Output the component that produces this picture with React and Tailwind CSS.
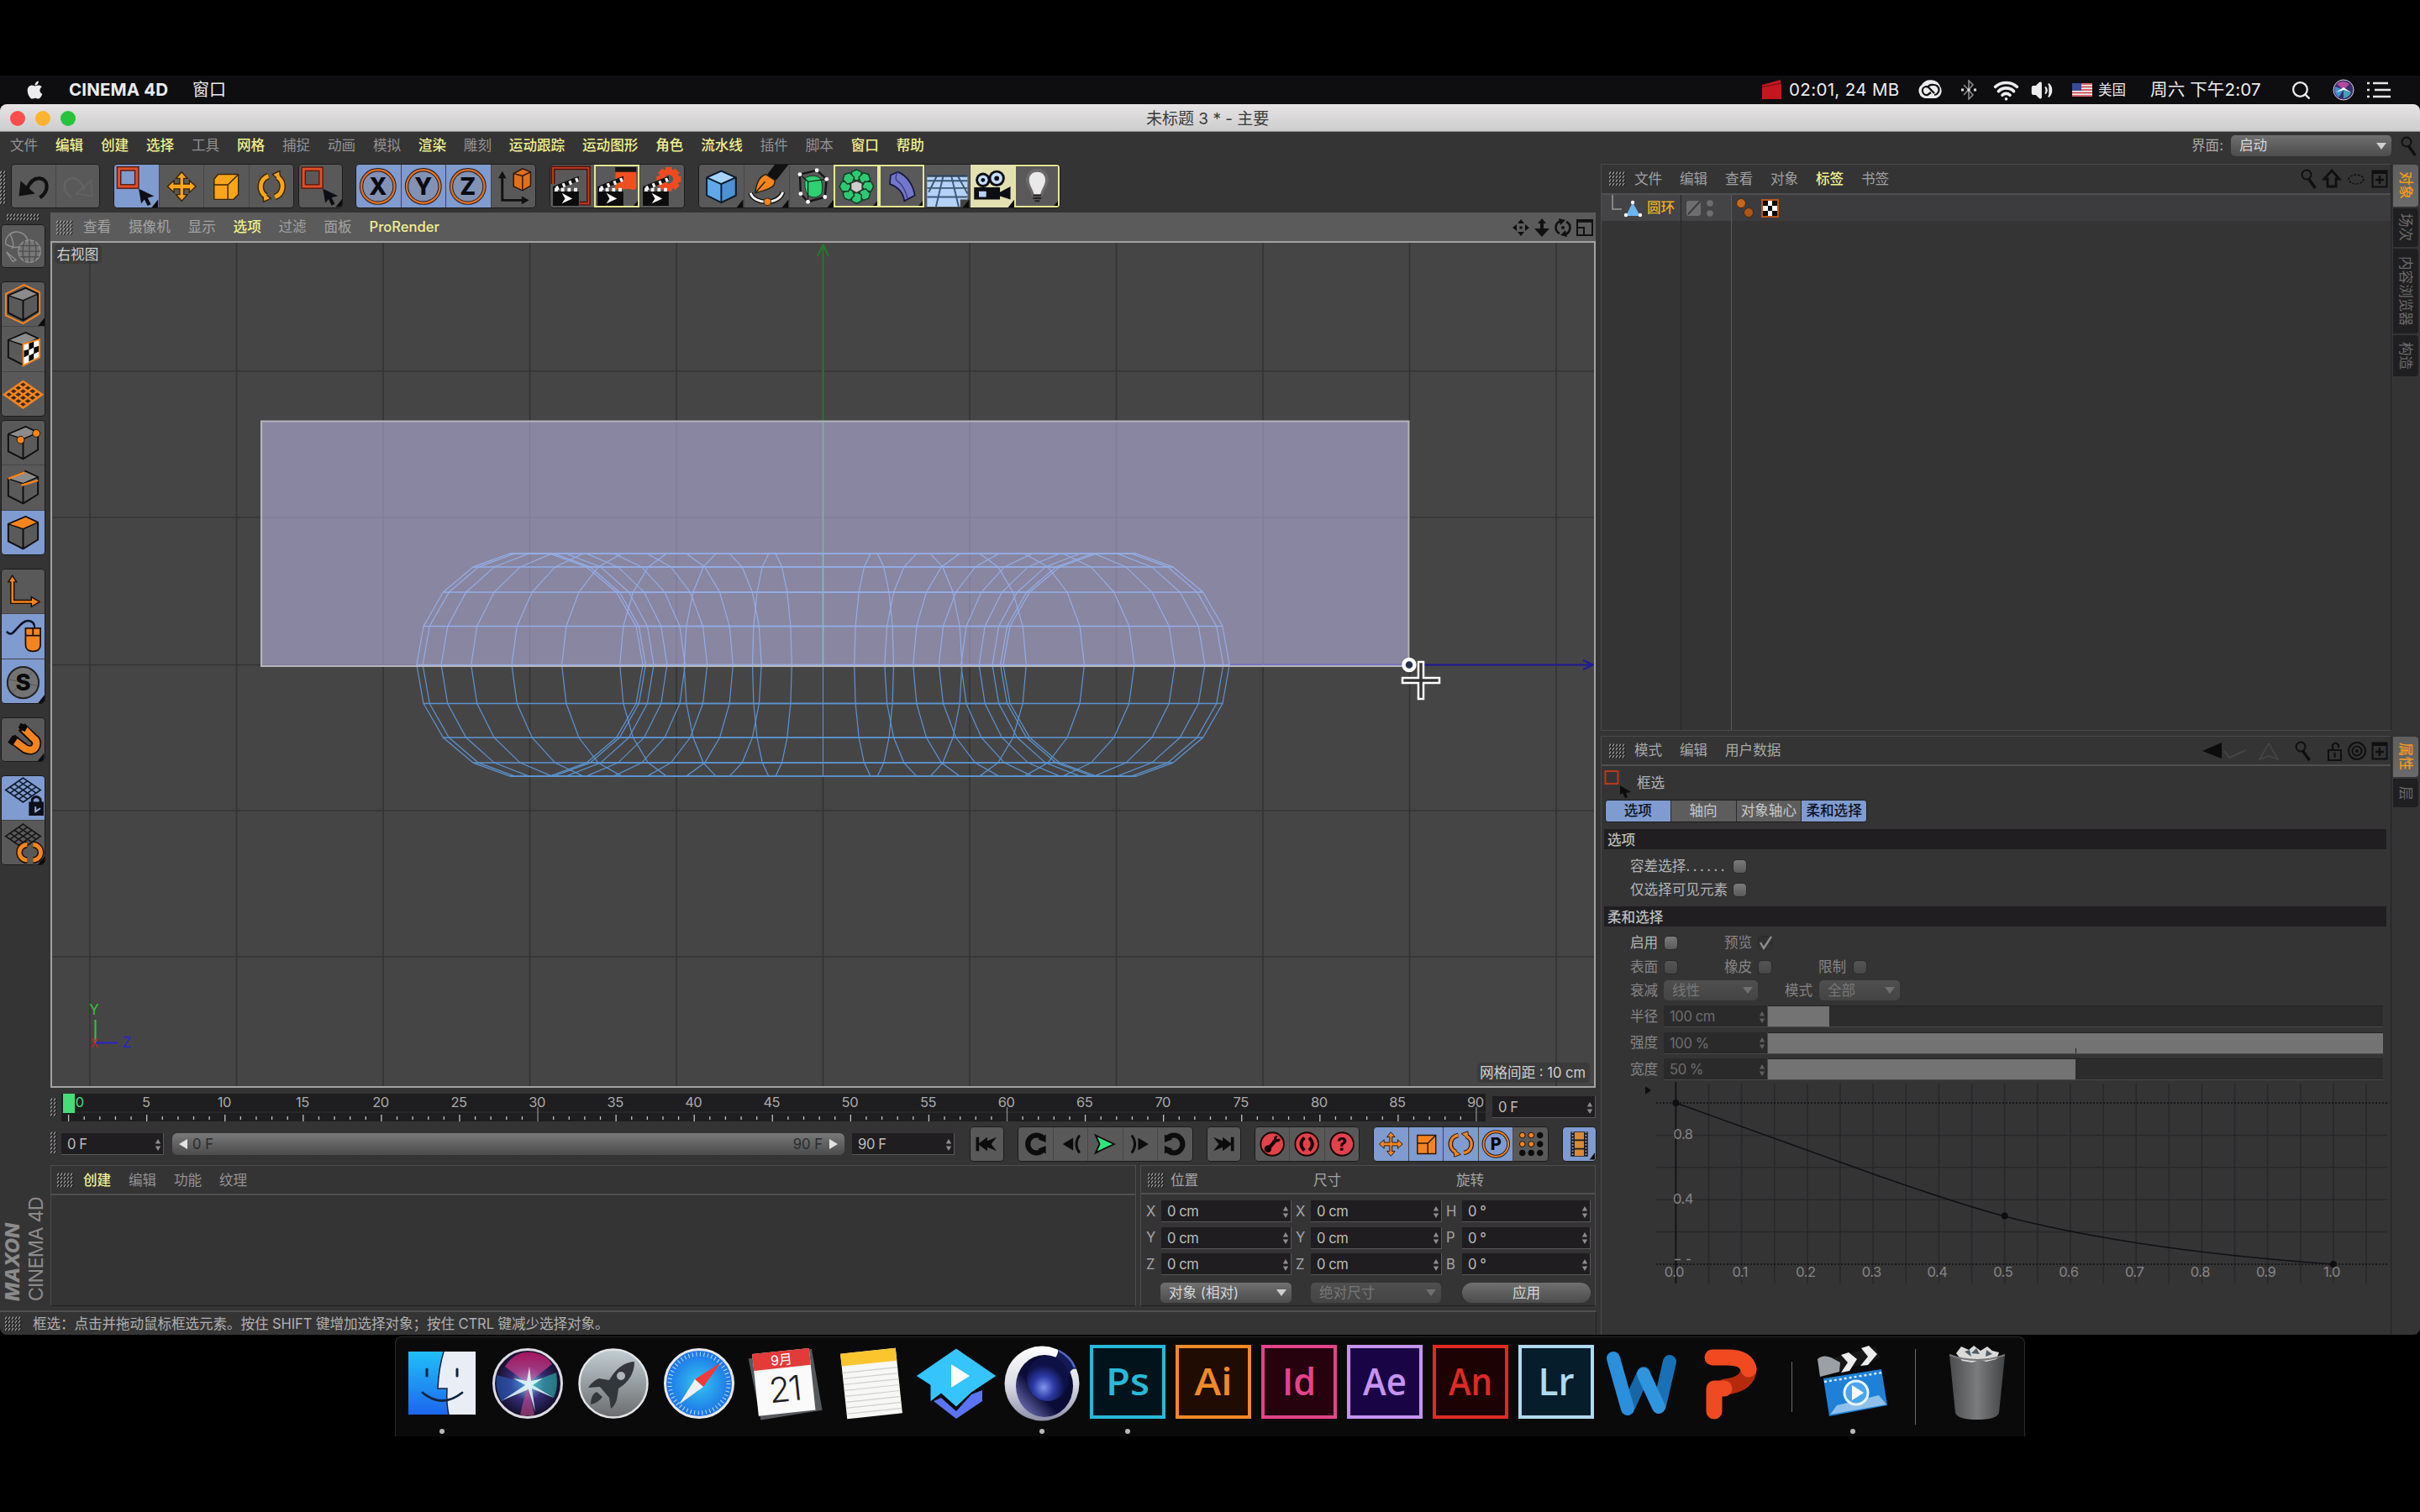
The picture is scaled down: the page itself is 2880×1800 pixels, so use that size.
import React from 'react'
import clsx from 'clsx'
import { FaApple } from 'react-icons/fa'
import { Search, Wifi, Volume2 } from 'lucide-react'

const OR = '#f5841f'
const AM = '#f9a51b'

/* ---------- small building blocks ---------- */

const Grip = ({ cols = 5, rows = 4, className }) => (
  <svg width={cols * 4} height={rows * 4.5} className={clsx('shrink-0', className)}>
    {Array.from({ length: cols * rows }, (_, i) => {
      const x = (i % cols) * 4
      const y = Math.floor(i / cols) * 4.5
      return (
        <g key={i}>
          <path d={`M${x} ${y + 3.6}l2-3`} stroke="#a5a5a5" strokeWidth="1.1" />
          <path d={`M${x + 1.4} ${y + 4.2}l2-3`} stroke="#151515" strokeWidth="1" />
        </g>
      )
    })}
  </svg>
)

const MenuItems = ({ items, dim = 'text-[#929292]' }) => (
  <div className="flex items-center gap-[20.8px] text-[16.6px] leading-none">
    {items.map(([label, on]) => (
      <span key={label} className={clsx('whitespace-nowrap', on ? 'font-medium text-[#eff08f]' : dim)}>
        {label}
      </span>
    ))}
  </div>
)

const Spinner = ({ color = '#8d8d8d' }) => (
  <svg width="8" height="14" viewBox="0 0 8 14" className="shrink-0">
    <path d="M4 0l3.2 5.6H.8zM4 14L.8 8.4h6.4z" fill={color} />
  </svg>
)

const Field = ({ value, className, off }) => (
  <div
    className={clsx(
      'flex shrink-0 items-center justify-between border-r border-b pt-[2px] pr-[2px] pl-[7px] text-[16.6px] leading-none tracking-tight whitespace-nowrap',
      off ? 'border-[#474747] bg-[#2b2a2b] text-[#6d6d6d]' : 'border-[#585858] bg-[#1f1d20] text-[#bdbdbd]',
      className,
    )}
  >
    <span>{value}</span>
    <Spinner color={off ? '#5f5f5f' : '#8d8d8d'} />
  </div>
)

const Dropdown = ({ value, className, off }) => (
  <div
    className={clsx(
      'flex shrink-0 items-center justify-between rounded-[5px] bg-linear-to-b pr-[6px] pl-[10px] text-[16.6px] leading-none',
      off ? 'from-[#4f4f4f] to-[#444] text-[#777]' : 'from-[#707070] to-[#4c4c4c] text-[#d6d6d6]',
      className,
    )}
  >
    <span>{value}</span>
    <svg width="12" height="8">
      <path d="M0 0h12L6 8z" fill={off ? '#6f6f6f' : '#d0d0d0'} />
    </svg>
  </div>
)

const Check = ({ off, checked }) => (
  <span className={clsx('flex h-[17px] w-[17px] shrink-0 rounded-[5px] border border-[#2a2a2a] bg-linear-to-b', checked ? 'from-[#2f2f2f] to-[#353535]' : off ? 'from-[#555] to-[#474747]' : 'from-[#7b7b7b] to-[#5a5a5a]')}>
    {checked && (
      <svg width="17" height="17" viewBox="0 0 17 17" className="overflow-visible">
        <path d="M2 7l4 7L15 0" fill="none" stroke="#8d8d8d" strokeWidth="2.4" />
      </svg>
    )}
  </span>
)

const Corner = () => <path d="M54 43v10H46z" fill="#0c0c0c" />

/* ---------- toolbar icons, drawn on a 54x53 grid ---------- */

const icons = {
  undo: (
    <g>
      <path d="M35 41C47 33 46 18 35 17C27 16 22 23 19 30" fill="none" stroke="#111" strokeWidth="4.5" />
      <path d="M9 39l2-19 18 16z" fill="#111" />
    </g>
  ),
  redo: (
    <g opacity=".5">
      <path d="M19 41C7 33 8 18 19 17C27 16 32 23 35 30" fill="none" stroke="#6c6c6c" strokeWidth="3" />
      <path d="M45 39l-2-19-18 16z" fill="none" stroke="#6c6c6c" strokeWidth="2" />
    </g>
  ),
  select: (
    <g>
      <rect x="5.5" y="5" width="22" height="22" fill="none" stroke="#5b1a0b" strokeWidth="6" />
      <rect x="5.5" y="5" width="22" height="22" fill="none" stroke="#e0502c" strokeWidth="3" />
      <path d="M30 30l19 9-8 2 4 8-4 2-4-8-4 5z" fill="#0d0d14" />
      <Corner />
    </g>
  ),
  move: (
    <path
      d="M27 9l7 8h-4.5v7h7v-4.5l8 7.5-8 7.5V30h-7v7H34l-7 8-7-8h4.500v-7h-7v4.5L9.500 27l8-7.500V24h7v-7H20z"
      fill={AM}
      stroke="#3b2605"
      strokeWidth="1.5"
    />
  ),
  scale: (
    <g stroke="#3b2605" strokeWidth="1.5" fill={AM} strokeLinejoin="round">
      <path d="M17 12h25v25l-6 6H12V18z" />
      <path d="M12 25h17v18H12zM29 25l13-13" />
    </g>
  ),
  rotate: (
    <g fill="none">
      <g stroke="#3b2605" strokeWidth="8">
        <path d="M23 14A14 14 0 0 0 20 39M31 40A14 14 0 0 0 34 15" />
      </g>
      <path d="M16 33l10 9-9 4zM38 21l-10-9 9-4z" fill={AM} stroke="#3b2605" strokeWidth="1.5" />
      <g stroke={AM} strokeWidth="5">
        <path d="M23 14A14 14 0 0 0 20 39M31 40A14 14 0 0 0 34 15" />
      </g>
    </g>
  ),
  coord: (
    <g>
      <path d="M13 13v31h29" fill="none" stroke="#111" strokeWidth="3" />
      <path d="M13 8l5 9H8zM46 44l-9-5v10z" fill="#111" />
      <path d="M27 11l11-6 10 4v17l-10 6-11-5z" fill="#e0701b" stroke="#2a1503" strokeWidth="1.5" />
      <path d="M27 11l11 3 10-5M38 14v18" fill="none" stroke="#2a1503" strokeWidth="1.5" />
    </g>
  ),
  cube: (
    <g stroke="#0e1c2b" strokeWidth="2" strokeLinejoin="round">
      <path d="M27 8l18 8v22L27 47 9 38V16z" fill="#5fa8ea" />
      <path d="M27 8l18 8-18 8L9 16z" fill="#a5d4fb" />
      <path d="M27 24l18-8v22l-18 9z" fill="#4c92d6" />
      <path d="M54 43v10H46z" fill="#0c0c0c" stroke="none" />
    </g>
  ),
  pen: (
    <g>
      <path d="M28 12l9-12h17l-14 18-6 3z" fill="#111" />
      <path d="M26 12l11 7c1 7-3 11-24 16 1-11 4-20 13-23z" fill={OR} stroke="#221" strokeWidth="1.5" />
      <path d="M13 35l12-14" stroke="#221" strokeWidth="1.5" />
      <path d="M7 35C12 50 42 50 47 34" fill="none" stroke="#111" strokeWidth="6" />
      <path d="M7 35C12 50 42 50 47 34" fill="none" stroke="#f2f2f2" strokeWidth="3" />
      <circle cx="28" cy="46" r="4.5" fill={OR} stroke="#221" />
      <Corner />
    </g>
  ),
  sds: (
    <g>
      <path d="M12 12l21-5 12 11-2 22-21 6-9-10z" fill="none" stroke="#151515" strokeWidth="2.5" />
      <path d="M19 16q11-5 18 1 4 6 2 19-8 8-17 2-6-9-3-22z" fill="#2fcf72" stroke="#0d3a20" />
      <path d="M12 12l10 9 23-3M22 21v25" fill="none" stroke="#151515" strokeWidth="1.2" />
      {[[12, 12], [33, 7], [45, 18], [43, 40], [22, 46], [13, 36]].map(([x, y]) => (
        <circle key={x} cx={x} cy={y} r="2.5" fill="#fff" />
      ))}
      <Corner />
    </g>
  ),
  array: (
    <g>
      {[0, 45, 90, 135, 180, 225, 270, 315].map((a) => (
        <g key={a} transform={`rotate(${a} 27 27)`}>
          <path d="M21 9l6-3 6 3v8l-6 3-6-3z" fill="#31c873" stroke="#0c3d21" strokeWidth="1.5" />
        </g>
      ))}
      <path d="M20 23l7-3 7 3v8l-7 4-7-4z" fill="#cfcfcf" stroke="#333" strokeWidth="1.5" />
      <Corner />
    </g>
  ),
  bend: (
    <g>
      <path d="M13 13l9-4c12 5 19 17 21 29l-13 7C29 36 23 28 12 24z" fill="#7377c9" stroke="#17183d" strokeWidth="1.8" />
      <path d="M22 9c-3 5-3 8-2 10 6 4 11 11 14 23" fill="none" stroke="#3b3e86" strokeWidth="1.5" />
      <Corner />
    </g>
  ),
  floor: (
    <g>
      <path d="M2 14h50v38H2z" fill="#b4d2f7" />
      <path d="M2 20h50M2 29h50M2 40h50M14 14L4 34M22 14l-9 38M32 14l9 38M40 14l12 22" stroke="#3c5878" strokeWidth="2" />
      <path d="M2 14h50" stroke="#33475f" strokeWidth="2.5" />
      <path d="M43 43h11v10H43z" fill="#444" />
      <Corner />
    </g>
  ),
  camera: (
    <g>
      <path d="M4 28h32v15H4zM36 34l13-7v16l-13-4z" fill="#0d0d14" />
      <circle cx="15" cy="19" r="9" fill="#0d0d14" />
      <circle cx="32" cy="17" r="10" fill="#0d0d14" />
      <circle cx="15" cy="19" r="6" fill="#c7dcfa" />
      <circle cx="32" cy="17" r="7" fill="#c7dcfa" />
      <circle cx="15" cy="19" r="2.5" fill="#0d0d14" />
      <circle cx="32" cy="17" r="3" fill="#0d0d14" />
      <path d="M10 33h9v7h-9z" fill="#b9d1f5" />
      <Corner />
    </g>
  ),
  bulb: (
    <g>
      <path d="M27 7c8 0 12 6 12 12 0 8-6 11-7 18H22c-1-7-7-10-7-18C15 13 19 7 27 7z" fill="#8d8d8d" stroke="#777" strokeWidth="4" opacity=".6" />
      <path d="M27 9c7 0 10 5 10 10 0 7-5 11-6 18h-8c-1-7-6-11-6-18 0-5 3-10 10-10z" fill="#e9e9e9" />
      <path d="M22 38h10M22 41.500h10M24 45h6" stroke="#222" strokeWidth="2" />
      <Corner />
    </g>
  ),
}

const Clapper = ({ children }) => (
  <g>
    {children}
    <path d="M3 33l32-13v-6L3 27z" fill="#111" />
    <path d="M7 29.500l3-1.200M15 26l3-1.200M23 23l3-1.200M31 19.500l3-1.200" stroke="#fff" strokeWidth="5" />
    <path d="M3 33h32v18H3z" fill="#0c0c0c" />
    <path d="M5 31h4M13 31h4M21 31h4M29 31h4" stroke="#f4f4f4" strokeWidth="4.5" />
    <path d="M14 35l13 7-13 6 4-6z" fill="#fff" />
  </g>
)

const gear = Array.from({ length: 8 }, (_, i) => i * 45)

icons.renderView = (
  <Clapper>
    <path d="M3 24V4h44v44H36" fill="none" stroke="#4a130a" strokeWidth="5" />
    <path d="M3 24V4h44v44H36" fill="none" stroke="#c23a24" strokeWidth="2" />
  </Clapper>
)
icons.renderPic = (
  <Clapper>
    <path d="M25 3h26v10H25z" fill="#151515" />
    <path d="M25 9h26v20q-3 4-8 1l-18 1z" fill="#f0501f" />
    <Corner />
  </Clapper>
)
icons.renderSet = (
  <Clapper>
    {gear.map((a) => (
      <path key={a} d="M31 3h8v8h-8z" fill="#ef4b1f" transform={`rotate(${a} 35 18)`} />
    ))}
    <circle cx="35" cy="18" r="9" fill="none" stroke="#ef4b1f" strokeWidth="7" />
  </Clapper>
)

const Axis = ({ letter }) => (
  <g>
    <circle cx="26.5" cy="27" r="20.5" fill="#8292b4" stroke="#1b1b26" strokeWidth="4.500" />
    <circle cx="26.5" cy="27" r="20.5" fill="none" stroke="#df6f22" strokeWidth="2.500" />
    <text x="26.5" y="37" textAnchor="middle" fontSize="29" fontWeight="800" fill="#0a0a12">{letter}</text>
  </g>
)
icons.x = <Axis letter="X" />
icons.y = <Axis letter="Y" />
icons.z = <Axis letter="Z" />

/* ---------- left palette icons, drawn on a 52x53 grid ---------- */

const Cube = ({ children, top = '#8c8c8c' }) => (
  <g strokeLinejoin="round">
    <path d="M8 16l21-9 15 7v21L26 46 8 37z" fill="#5a5a5a" stroke="#0f0f0f" strokeWidth="2" />
    <path d="M8 16l21-9 15 7-18 8z" fill={top} stroke="#0f0f0f" strokeWidth="1.5" />
    <path d="M26 22v24" stroke="#0f0f0f" strokeWidth="2" />
    {children}
  </g>
)

const Mesh = ({ color, fill = 'none', dy = 0, k = 1, sw = 2 }) => (
  <g transform={`translate(${26 - 26 * k} ${dy}) scale(${k})`} stroke={color} strokeWidth={sw} fill="none">
    <path d="M26 11L49 27 26 43 3 27z" fill={fill} />
    <path d="M20.200 15l23 16M14.500 19l23 16M8.800 23l23 16M31.800 15L8.800 31M37.500 19L14.500 35M43.200 23L20.200 39" />
  </g>
)

icons.globe = (
  <g fill="none" stroke="#8f8f8f" strokeWidth="1.5">
    <path d="M4 24a14 14 0 0 1 28-3M4 24q14 8 22 0M10 12q6 14 2 18" />
    <circle cx="34" cy="33" r="14" fill="#777" />
    <path d="M20 33h28M22 26h24M22 40h24M34 19v28M28 20q-5 13 0 26M40 20q5 13 0 26" stroke="#4f4f4f" />
    <path d="M5 34l12 10-4 2z" />
  </g>
)
icons.model = (
  <g>
    <path d="M5 14L27 3l19 9v26L26 50 5 40z" fill="none" stroke={OR} strokeWidth="2" />
    <Cube />
    <path d="M52 43v10h-8z" fill="#0c0c0c" />
  </g>
)
icons.texture = (
  <Cube>
    <path d="M26 21l20-6v22l-20 10z" fill="#fff" stroke={OR} strokeWidth="2" />
    <path d="M33 20l6-2v7l-6 3zM27 29l6-2v7l-6 3zM39 25l6-2v7l-6 3zM33 35l6-3v7l-6 3z" fill="#0a0a0a" />
  </Cube>
)
icons.mesh = <Mesh color={OR} fill="#3a2a1c" sw={2.6} />
icons.points = (
  <Cube>
    <circle cx="23" cy="23" r="4.5" fill={OR} stroke="#251303" />
    <circle cx="42" cy="15" r="4.5" fill={OR} stroke="#251303" />
  </Cube>
)
icons.edges = (
  <Cube>
    <path d="M8 16l20-8M24 24l20-6" stroke={OR} strokeWidth="2.5" />
  </Cube>
)
icons.polys = <Cube top={OR} />
icons.axisMode = (
  <g fill={OR} stroke="#1c1006" strokeWidth="1.5">
    <path d="M13 7l5 8h-3v22h21v-4l10 6-10 6v-4H11V15H8z" />
  </g>
)
icons.mouse = (
  <g>
    <path d="M6 21C14 32 20 8 32 8c6 0 8 4 8 9" fill="none" stroke="#0b1424" strokeWidth="2.5" />
    <path d="M29 17h18v20q0 8-9 8t-9-8z" fill={OR} stroke="#1c1006" strokeWidth="1.8" />
    <path d="M29 26h18M38 17v9" stroke="#1c1006" strokeWidth="1.8" />
  </g>
)
icons.solo = (
  <g>
    <circle cx="26" cy="28" r="19" fill="#737373" stroke="#222" strokeWidth="2" />
    <path d="M8 24l36 8M13 40L38 14" stroke="#555" />
    <text x="26" y="38" textAnchor="middle" fontSize="28" fontWeight="800" fill="#0a0a0a">S</text>
    <path d="M52 43v10h-8z" fill="#0c0c0c" />
  </g>
)
icons.magnet = (
  <g>
    <path d="M12 25l17 13q10 4 13-4 2-6-4-10L24 11" fill="none" stroke="#130b04" strokeWidth="12" />
    <path d="M14 27l15 11q10 4 13-4 2-6-4-10L27 13" fill="none" stroke={OR} strokeWidth="8.5" />
    <path d="M7 30l6-9 6 4-6 9zM20 12l3-6 9 4-4 7z" fill="#0a0a0a" />
    <path d="M52 43v10h-8z" fill="#0c0c0c" />
  </g>
)
icons.gridLock = (
  <g>
    <Mesh color="#101a2c" dy={-8} k={0.92} sw={1.8} />
    <path d="M33 31h18v17H33z" fill="#0b0f18" />
    <path d="M37 32v-4q5-6 10 0v4" fill="none" stroke="#0b0f18" strokeWidth="3" />
    <path d="M41 37v6l6-4" stroke="#9ab0dc" strokeWidth="2" fill="none" />
  </g>
)
icons.gridRotate = (
  <g>
    <Mesh color="#151515" dy={-6} k={0.92} sw={1.800} />
    <path d="M31 29a9.500 9.500 0 0 0 0 19M38 48a9.500 9.500 0 0 0 0-19" stroke="#1c1006" strokeWidth="8" fill="none" />
    <path d="M31 29a9.500 9.500 0 0 0 0 19M38 48a9.500 9.500 0 0 0 0-19" stroke={OR} strokeWidth="5" fill="none" />
    <path d="M52 43v10h-8z" fill="#0c0c0c" />
  </g>
)

/* ---------- transport icons, drawn on a 42x42 grid ---------- */

const RedDot = ({ children }) => (
  <g>
    <circle cx="21" cy="21" r="14.500" fill="#e2424b" stroke="#1b0505" strokeWidth="2" />
    {children}
  </g>
)

Object.assign(icons, {
  first: <path d="M7 12h4v8L21.500 12v5l12-5-7 9 7 9-12-5v5L11 22v8H7z" fill="#0c0c0c" />,
  last: <path d="M34 12h-4v8L19.500 12v5l-12-5 7 9-7 9 12-5v5L30 22v8h4z" fill="#0c0c0c" />,
  prevKey: (
    <g>
      <path d="M30 13A11 11 0 1 0 30 29" fill="none" stroke="#0c0c0c" strokeWidth="6.500" />
      <path d="M34 9v10l-10-4zM34 33V23l-10 4z" fill="#0c0c0c" />
    </g>
  ),
  nextKey: (
    <g>
      <path d="M12 13A11 11 0 1 1 12 29" fill="none" stroke="#0c0c0c" strokeWidth="6.500" />
      <path d="M8 9v10l10-4zM8 33V23l10 4z" fill="#0c0c0c" />
    </g>
  ),
  prev: (
    <g>
      <path d="M11 21l13-8v16z" fill="#0c0c0c" />
      <path d="M32 10q-8 11 0 22" fill="none" stroke="#0c0c0c" strokeWidth="3" />
    </g>
  ),
  next: (
    <g>
      <path d="M31 21l-13-8v16z" fill="#0c0c0c" />
      <path d="M10 10q8 11 0 22" fill="none" stroke="#0c0c0c" strokeWidth="3" />
    </g>
  ),
  play: <path d="M9 10l23 11L9 32l5-11z" fill="#2ee57f" stroke="#0c0c0c" strokeWidth="2" />,
  key: (
    <RedDot>
      <path d="M16 27L26 15" stroke="#160404" strokeWidth="4.500" />
      <circle cx="15.500" cy="27" r="4.500" fill="#160404" />
      <circle cx="27" cy="14.500" r="4" fill="#160404" />
      <path d="M28 10l-2 5 6-1z" fill="#e2424b" />
    </RedDot>
  ),
  auto: (
    <RedDot>
      <path d="M18 13q-8 8 0 16M24 29q8-8 0-16" fill="none" stroke="#160404" strokeWidth="4" />
    </RedDot>
  ),
  help: (
    <RedDot>
      <text x="21" y="29" textAnchor="middle" fontSize="22" fontWeight="800" fill="#160404">?</text>
    </RedDot>
  ),
  tMove: (
    <path d="M21 6l5 6h-3.500v7h7v-3.500l6 5.500-6 5.500V23h-7v7H26l-5 6-5-6h3.500v-7h-7v3.500L6.500 21l6-5.500V19h7v-7H16z" fill={OR} stroke="#2a1705" />
  ),
  tScale: (
    <g stroke="#2a1705" fill={OR} strokeWidth="1.500">
      <path d="M10 10h23v23H10z" />
      <path d="M10 20h13v13M23 20l10-10" fill="none" />
    </g>
  ),
  tRotate: (
    <g fill="none">
      <path d="M18 10A11 11 0 0 0 15 31M25 32A11 11 0 0 0 28 11" stroke="#2a1705" strokeWidth="6" />
      <path d="M12 27l9 7-8 3zM31 15l-9-7 8-3z" fill={OR} stroke="#2a1705" />
      <path d="M18 10A11 11 0 0 0 15 31M25 32A11 11 0 0 0 28 11" stroke={OR} strokeWidth="3.500" />
    </g>
  ),
  tParam: (
    <g>
      <circle cx="21" cy="21" r="15.500" fill="none" stroke="#1b1b26" strokeWidth="4" />
      <circle cx="21" cy="21" r="15.500" fill="none" stroke={OR} strokeWidth="2" />
      <text x="21" y="28.500" textAnchor="middle" fontSize="21" fontWeight="800" fill="#0a0a12">P</text>
    </g>
  ),
  tPla: (
    <g>
      {Array.from({ length: 9 }, (_, i) => (
        <circle key={i} cx={11 + (i % 3) * 11} cy={10 + Math.floor(i / 3) * 11} r="3.500" fill={i % 3 < 2 && i < 6 ? OR : '#0c0c0c'} stroke="#0c0c0c" />
      ))}
    </g>
  ),
  film: (
    <g>
      <path d="M10 5h22v32H10z" fill="#17171c" />
      <path d="M15 6h12v9H15zM15 17h12v9H15zM15 28h12v8H15z" fill="#d98a35" />
      <path d="M12.500 5v32M29.500 5v32" stroke="#8aa0cc" strokeWidth="2" strokeDasharray="2 2" />
      <path d="M41 32v9h-7z" fill="#0c0c0c" />
    </g>
  ),
})

const ON = 'bg-[#7f9bcf]'
const OFF = 'bg-[#5a5959]'

const ToolGroup = ({ items, className }) => (
  <div className={clsx('flex h-[53px] shrink-0 overflow-hidden rounded-[5px] border border-[#1b1b1b]', className)}>
    {items.map(([name, state], i) => (
      <div
        key={i}
        className={clsx(
          'flex-1',
          i > 0 && 'border-l border-[#474747]',
          state === 'on' ? ON : state === 'cream' ? 'bg-[#e3e1b2]' : OFF,
          state === 'ring' && 'outline-2 -outline-offset-2 outline-[#e6e795]',
        )}
      >
        <svg viewBox="0 0 54 53" className="h-full w-full">{icons[name]}</svg>
      </div>
    ))}
  </div>
)

const SideGroup = ({ items, className }) => (
  <div className={clsx('ml-[1px] flex w-[53px] shrink-0 flex-col overflow-hidden rounded-[5px] border border-[#1b1b1b]', className)}>
    {items.map(([name, on], i) => (
      <div key={name} className={clsx('min-h-0 flex-1', i > 0 && 'border-t border-[#444]', on ? ON : OFF)}>
        <svg viewBox="0 0 52 53" className="h-full w-full">{icons[name]}</svg>
      </div>
    ))}
  </div>
)

const TransportGroup = ({ items, className }) => (
  <div className={clsx('flex h-[42px] shrink-0 overflow-hidden rounded-[5px] border border-[#1b1b1b]', className)}>
    {items.map(([name, on], i) => (
      <div key={name} className={clsx('flex-1', i > 0 && 'border-l border-[#474747]', on ? ON : OFF)}>
        <svg viewBox="0 0 42 42" className="h-full w-full">{icons[name]}</svg>
      </div>
    ))}
  </div>
)

/* ---------- macOS menu bar ---------- */

const MenuBar = () => (
  <div className="flex h-[34px] shrink-0 items-center bg-[#0e0d10] text-[20px] leading-none text-[#ececec]">
    <FaApple className="ml-[30px] h-[24px] w-[23px]" />
    <span className="ml-[29px] w-[119px] text-[20.500px] font-bold tracking-[0.150px] whitespace-nowrap">CINEMA 4D</span>
    <span className="ml-[28px]">窗口</span>
    <div className="ml-auto flex items-center">
      <svg width="24" height="24" viewBox="0 0 24 24">
        <path d="M0 6L22 0v5h1v18H0z" fill="#c4161f" />
        <path d="M0 8.500L23 4" stroke="#6f0a10" />
      </svg>
      <span className="ml-[8px] w-[136px] text-[20.500px] tracking-[0.350px] whitespace-nowrap">02:01, 24 MB</span>
      <svg width="30" height="24" viewBox="0 0 30 24" className="ml-[17px]">
        <path d="M9 22a9 9 0 0 1-4-16A12 11 0 0 1 27 8a9 9 0 0 1-6 14z" fill="#ececec" />
        <g fill="none" stroke="#0e0d10" strokeWidth="2.200">
          <path d="M16 15l-4 3a5 5 0 0 1-2-10q3 0 5 3l5 5" />
          <path d="M12 9q2-4 7-3a6 6 0 0 1 1 12" />
        </g>
      </svg>
      <svg width="20" height="24" viewBox="0 0 20 24" className="ml-[21px]">
        <path d="M4 6l11 12-5 5V1l5 5L4 18" fill="none" stroke="#8b8b8b" strokeWidth="1.600" />
        <path d="M1 12h3M8.500 12h3M16 12h3" stroke="#dedede" strokeWidth="3.200" />
      </svg>
      <Wifi className="ml-[18px] h-[31px] w-[33px]" strokeWidth={2.8} />
      <Volume2 className="ml-[12px] h-[27px] w-[28px]" fill="currentColor" strokeWidth={1.8} />
      <svg width="24" height="16" viewBox="0 0 24 16" className="ml-[22px]">
        <path d="M0 0h24v16H0z" fill="#eee" />
        <path d="M0 1h24M0 4.500h24M0 8h24M0 11.500h24M0 15h24" stroke="#d0343f" strokeWidth="1.700" />
        <path d="M0 0h11v9H0z" fill="#3b4a94" />
      </svg>
      <span className="ml-[7px] w-[34px] text-[16.500px]">美国</span>
      <span className="ml-[28px] w-[137px] text-[20.500px] tracking-[0.150px] whitespace-nowrap">周六 下午2:07</span>
      <Search className="ml-[30px] h-[25px] w-[25px]" strokeWidth={2.2} />
      <svg width="26" height="26" viewBox="0 0 26 26" className="ml-[25px]">
        <circle cx="13" cy="13" r="12" fill="#3a2d70" stroke="#d8d4de" />
        <path d="M13 13L5 6q7-6 15 0z" fill="#b54a9c" />
        <path d="M13 13L3 9q-2 8 4 13z" fill="#3f8fd6" />
        <path d="M4 16l9-6 9 6-9-3z" fill="#fff" />
        <path d="M13 13l9 3q-2 6-9 7z" fill="#4ccfd0" opacity=".7" />
      </svg>
      <svg width="30" height="20" viewBox="0 0 30 20" className="mr-[33px] ml-[15px]">
        <path d="M0 2h3M7 2h18M0 10h3M9 10h19M0 18h3M7 18h21" stroke="#e6e6e6" strokeWidth="2.600" />
      </svg>
    </div>
  </div>
)

const TitleBar = () => (
  <div className="flex h-[33px] shrink-0 items-center rounded-t-[8px] border-b border-[#8e8e8e] bg-linear-to-b from-[#e6e4e5] to-[#cecdce] pt-[1px]">
    <div className="flex w-[1364px] items-center gap-[12px] pl-[12px]">
      <i className="h-[18px] w-[18px] rounded-full bg-[#fb4d4b]" />
      <i className="h-[18px] w-[18px] rounded-full bg-[#fcb32f]" />
      <i className="h-[18px] w-[18px] rounded-full bg-[#27c33b]" />
    </div>
    <span className="pt-[1px] text-[19px] leading-none whitespace-nowrap text-[#3a3a3a]">未标题 3 * - 主要</span>
  </div>
)

const MENU = [
  ['文件'], ['编辑', 1], ['创建', 1], ['选择', 1], ['工具'], ['网格', 1], ['捕捉'], ['动画'], ['模拟'], ['渲染', 1], ['雕刻'],
  ['运动跟踪', 1], ['运动图形', 1], ['角色', 1], ['流水线', 1], ['插件'], ['脚本'], ['窗口', 1], ['帮助', 1],
]

const Loupe = ({ className }) => (
  <svg width="20" height="24" viewBox="0 0 20 24" className={className}>
    <circle cx="7" cy="7" r="5.500" fill="none" stroke="#0f0f0f" strokeWidth="2" />
    <path d="M9.500 12l8 11" stroke="#0f0f0f" strokeWidth="3.500" />
  </svg>
)

const PlusBox = ({ className }) => (
  <svg width="20" height="22" viewBox="0 0 20 22" className={className}>
    <path d="M1.500 1.500h17v19h-17z" fill="none" stroke="#0f0f0f" strokeWidth="2" />
    <path d="M1 3h18" stroke="#0f0f0f" strokeWidth="4" />
    <path d="M10 7v10M5 12h10" stroke="#0f0f0f" strokeWidth="2.500" />
  </svg>
)

/* ---------- viewport ---------- */

const CX = 979.5
const CY = 791.5
const R = 349
const r = 134.6
const rad = (d) => (d * Math.PI) / 180

const meridians = Array.from({ length: 19 }, (_, k) => {
  const c = Math.cos(rad(k * 10))
  return Array.from({ length: 18 }, (_, j) => {
    const t = rad(j * 20)
    return `${(CX + (R + r * Math.cos(t)) * c).toFixed(1)},${(CY - r * Math.sin(t)).toFixed(1)}`
  }).join(' ')
})

const parallels = Array.from({ length: 18 }, (_, j) => {
  const t = rad(j * 20)
  return [R + r * Math.cos(t), CY - r * Math.sin(t)]
})

const Viewport = () => (
  <svg viewBox="60 287 1839 1008" className="block h-[1008px] w-[1839px] shrink-0 bg-[#464546]">
    <g stroke="#353435" strokeWidth="1.600">
      {[107, 281.5, 456, 630.5, 805, 979.5, 1154, 1328.5, 1503, 1677.5, 1852].map((x) => (
        <path key={x} d={`M${x} 288V1294`} />
      ))}
      {[441.7, 616, 791.5, 965, 1139].map((y) => (
        <path key={y} d={`M61 ${y}H1897`} />
      ))}
    </g>
    <path d="M979.500 791V292M973 305l6.500-14 6.500 14" fill="none" stroke="#257a2a" strokeWidth="2" />
    <path d="M980 791.500H1894M1884 786l12 5.500-12 5.500" fill="none" stroke="#1d1b96" strokeWidth="2" />
    <g fill="none" stroke="#5c94cf" strokeWidth="1.200">
      {meridians.map((pts, i) => (
        <polygon key={i} points={pts} />
      ))}
      {parallels.map(([w, y], i) => (
        <path key={i} d={`M${CX - w} ${y}H${CX + w}`} strokeWidth="1.500" />
      ))}
    </g>
    <rect x="311" y="501.500" width="1365.500" height="291.500" fill="rgb(204,199,252)" fillOpacity=".5" stroke="#b6b5bb" strokeWidth="2" />
    <path d="M979.500 502V658" stroke="#7fb09b" strokeWidth="1.500" />
    <path d="M979.500 658V791" stroke="#7cb9c9" strokeWidth="1.500" />
    <g>
      <path d="M1688 788h6v19h19v6h-19v19h-6v-19h-19v-6h19z" fill="#333" stroke="#fff" strokeWidth="2.500" />
      <circle cx="1677" cy="791.500" r="6.500" fill="#26304a" stroke="#fff" strokeWidth="4.500" />
    </g>
    <rect x="65" y="291" width="56" height="23" rx="5" fill="#333" fillOpacity=".55" />
    <text x="67.500" y="309" fontSize="16.600" fill="#d0d0d0">右视图</text>
    <rect x="1758" y="1265" width="134" height="24" rx="5" fill="#333" fillOpacity=".55" />
    <text x="1761" y="1283" fontSize="16.600" fill="#d0d0d0" textLength="126">网格间距 : 10 cm</text>
    <path d="M113.500 1214v27" stroke="#38c238" strokeWidth="2" />
    <path d="M114 1241.500h26" stroke="#2725c8" strokeWidth="2" />
    <g fontSize="17" textAnchor="middle">
      <text x="112" y="1208" fill="#38c238">Y</text>
      <text x="112" y="1247" fill="#c41f27" fontSize="14">X</text>
      <text x="151" y="1247" fill="#2725c8">Z</text>
    </g>
    <rect x="61" y="288" width="1837" height="1006" fill="none" stroke="#a3a2a3" strokeWidth="2" />
  </svg>
)

const ViewportHeader = () => (
  <div className="flex h-[34px] shrink-0 items-center bg-[#5b5b5b] pt-[1px] pl-[7px]">
    <Grip className="mr-[12px]" />
    <MenuItems items={[['查看'], ['摄像机'], ['显示'], ['选项', 1], ['过滤'], ['面板'], ['ProRender', 1]]} dim="text-[#a3a3a3]" />
    <svg width="100" height="24" viewBox="0 0 100 24" className="mr-[1px] ml-auto">
      <g fill="#111">
        <path d="M12 2l4 5h-8zM12 22l4-5h-8zM2 12l5-4v8zM22 12l-5-4v8zM10.500 10.500h3v3h-3z" />
        <path d="M37 1l5 6h-3v6h7l-9 10-9-10h7V7h-3z" />
        <circle cx="62" cy="12" r="2" />
        <path d="M57 1l8 2-6 6zM67 23l-8-2 6-6z" />
      </g>
      <g fill="none" stroke="#111" strokeWidth="2.600">
        <path d="M60 4A8 8 0 0 0 58 19M64 20A8 8 0 0 0 66 5" />
        <path d="M79 3h18v18H79zM79 12h8v9" strokeWidth="2" />
        <path d="M79 4.500h18" />
      </g>
    </svg>
  </div>
)

/* ---------- timeline ---------- */

const frameX = (f) => 81.6 + f * 18.615

const Timeline = () => (
  <div className="flex h-[43px] shrink-0 items-start pt-[7px]">
    <Grip cols={2} rows={5} className="mt-[5px] mr-[5px]" />
    <svg viewBox="73 1302 1695 33" className="h-[33px] w-[1695px] shrink-0 bg-[#1e1d1f]">
      <path d="M73 1324H1768" stroke="#313032" />
      {Array.from({ length: 91 }, (_, f) => (
        <path
          key={f}
          d={`M${frameX(f)} ${f % 30 === 0 && f ? 1318 : f % 5 === 0 ? 1327 : 1329}V${f % 5 === 0 ? 1335 : 1333}`}
          stroke={f % 30 === 0 && f ? '#8a8a8a' : '#c2c2c2'}
          strokeWidth="1.300"
        />
      ))}
      <rect x="75" y="1302" width="14" height="23" fill="#46dd77" />
      <text x="95" y="1317.500" textAnchor="middle" fontSize="16.500" fill="#46dd77">0</text>
      {Array.from({ length: 18 }, (_, i) => (i + 1) * 5).map((f) => (
        <text key={f} x={frameX(f) - 1} y="1317.500" textAnchor="middle" fontSize="16.500" letterSpacing="-0.500" fill="#aaa">{f}</text>
      ))}
    </svg>
    <Field value="0 F" className="mt-[3px] ml-[8px] h-[26px] w-[123px]" />
  </div>
)

const Transport = () => (
  <div className="flex h-[48px] shrink-0 items-start pt-[3px]">
    <Grip cols={2} rows={6} className="mt-[6px] mr-[5px]" />
    <Field value="0 F" className="mt-[8px] h-[26px] w-[122px]" />
    <div className="mt-[8px] ml-[10px] flex h-[26px] w-[800px] shrink-0 items-center rounded-[6px] bg-linear-to-b from-[#7a7a7a] to-[#4b4b4b] px-[8px] text-[16.600px] leading-none text-[#2b2b2b]">
      <svg width="10" height="12"><path d="M10 0v12L0 6z" fill="#e3e3e3" /></svg>
      <span className="ml-[6px]">0 F</span>
      <span className="mr-[8px] ml-auto">90 F</span>
      <svg width="10" height="12"><path d="M0 0v12l10-6z" fill="#e3e3e3" /></svg>
    </div>
    <Field value="90 F" className="mt-[8px] ml-[9px] h-[26px] w-[122px]" />
    <TransportGroup className="ml-[18px] w-[41px]" items={[['first']]} />
    <TransportGroup className="ml-[16px] w-[209px]" items={[['prevKey'], ['prev'], ['play'], ['next'], ['nextKey']]} />
    <TransportGroup className="ml-[16px] w-[41px]" items={[['last']]} />
    <TransportGroup className="ml-[16px] w-[125px]" items={[['key'], ['auto'], ['help']]} />
    <TransportGroup className="ml-[16px] w-[209px]" items={[['tMove', 1], ['tScale', 1], ['tRotate', 1], ['tParam', 1], ['tPla']]} />
    <TransportGroup className="ml-[16px] w-[41px]" items={[['film', 1]]} />
  </div>
)

const Materials = () => (
  <div className="flex h-[168px] w-[1292px] flex-col border border-[#4d4d4d] border-b-[#222]">
    <div className="flex h-[35px] shrink-0 items-center border-b-2 border-[#505050] pt-[1px] pl-[7px]">
      <Grip className="mr-[11px]" />
      <MenuItems items={[['创建', 1], ['编辑'], ['功能'], ['纹理']]} />
    </div>
  </div>
)

const COORDS = [
  ['X', '0 cm', 'X', '0 cm', 'H', '0 °'],
  ['Y', '0 cm', 'Y', '0 cm', 'P', '0 °'],
  ['Z', '0 cm', 'Z', '0 cm', 'B', '0 °'],
]

const Coordinates = () => (
  <div className="ml-[5px] flex h-[168px] w-[542px] flex-col border border-[#4d4d4d] border-b-[#222] text-[16.600px] leading-none text-[#a5a5a5]">
    <div className="flex h-[34px] shrink-0 items-center border-b-2 border-[#505050] pt-[2px] pl-[8px]">
      <Grip className="mr-[7px]" />
      <span className="w-[170px]">位置</span>
      <span className="w-[170px]">尺寸</span>
      <span>旋转</span>
    </div>
    <div className="mt-[7px] flex flex-col gap-[5.500px] pl-[6px]">
      {COORDS.map((row) => (
        <div key={row[0]} className="flex h-[26px] items-center">
          <span className="w-[18px]">{row[0]}</span>
          <Field value={row[1]} className="h-[26px] w-[155px]" />
          <span className="w-[23px] pl-[5px]">{row[2]}</span>
          <Field value={row[3]} className="h-[26px] w-[156px]" />
          <span className="w-[24px] pl-[5px]">{row[4]}</span>
          <Field value={row[5]} className="h-[26px] w-[153px]" />
        </div>
      ))}
    </div>
    <div className="mt-[9px] flex pl-[23px]">
      <Dropdown value="对象 (相对)" className="h-[24px] w-[156px]" />
      <Dropdown value="绝对尺寸" off className="ml-[23px] h-[24px] w-[155px]" />
      <div className="ml-[25px] flex h-[24px] w-[153px] items-center justify-center rounded-full bg-linear-to-b from-[#707070] to-[#4c4c4c] text-[#d6d6d6]">应用</div>
    </div>
  </div>
)

/* ---------- right side ---------- */

const VTabs = ({ tabs }) => (
  <div className="flex w-[30px] flex-col">
    {tabs.map(([label, h, on]) => (
      <div
        key={label}
        style={{ height: h }}
        className={clsx(
          'mb-[2px] flex shrink-0 items-center justify-center rounded-r-[4px] text-[16.600px] leading-none [text-orientation:sideways] [writing-mode:vertical-rl]',
          on ? 'bg-linear-to-b from-[#5f5f5f] to-[#6a6a6a] font-medium text-[#f09a1c]' : 'bg-[#1f1e20] text-[#6a6a6a]',
        )}
      >
        {label}
      </div>
    ))}
  </div>
)

const ObjectManager = () => (
  <div className="flex h-[675px] shrink-0">
    <div className="flex w-[941px] flex-col border border-[#4a4a4a] border-r-[#222]">
      <div className="flex h-[36px] shrink-0 items-center border-b-2 border-[#505050] pl-[9px]">
        <Grip className="mr-[10px]" />
        <MenuItems items={[['文件'], ['编辑'], ['查看'], ['对象'], ['标签', 1], ['书签']]} dim="text-[#a0a0a0]" />
        <div className="mr-[3px] ml-auto flex items-center">
          <Loupe />
          <svg width="24" height="24" viewBox="0 0 24 24" className="ml-[5px]">
            <path d="M12 2l9 10h-4v9H7v-9H3z" fill="none" stroke="#0f0f0f" strokeWidth="2.800" />
          </svg>
          <svg width="20" height="14" viewBox="0 0 20 14" className="mr-[8px] ml-[7px]">
            <path d="M1 8q0-5 9-6 9 1 9 6-3 5-9 5t-9-5z" fill="none" stroke="#111" strokeWidth="1.500" strokeDasharray="3 1.500" />
          </svg>
          <PlusBox />
        </div>
      </div>
      <div className="flex flex-1">
        <div className="w-[95px] border-r border-[#252525]">
          <div className="flex h-[31px] items-center bg-[#444345] pl-[12px]">
            <svg width="42" height="31" viewBox="0 0 42 31">
              <path d="M1 0v17h11" fill="none" stroke="#9a9a9a" strokeWidth="1.500" />
              <path d="M25 9l9 16H17z" fill="#6db4ef" />
              <circle cx="25" cy="9" r="2.200" fill="#fff" />
              <circle cx="17" cy="24" r="2.200" fill="#fff" />
              <circle cx="34" cy="24" r="2.200" fill="#fff" />
            </svg>
            <span className="text-[16.600px] leading-none font-medium whitespace-nowrap text-[#edae22]">圆环</span>
          </div>
        </div>
        <div className="w-[60px] border-r border-[#5a5a5a]">
          <div className="flex h-[31px] items-center bg-[#444345] pl-[5px]">
            <svg width="36" height="22" viewBox="0 0 36 22">
              <rect x="1" y="2" width="17" height="18" rx="3" fill="#6d6d6d" />
              <path d="M3 18L17 3" stroke="#3b3b3b" strokeWidth="2" />
              <circle cx="29" cy="5" r="3.800" fill="#6d6d6d" />
              <circle cx="29" cy="17" r="3.800" fill="#6d6d6d" />
            </svg>
          </div>
        </div>
        <div className="flex-1">
          <div className="flex h-[31px] items-center bg-[#3c3c3e] pl-[5px]">
            <svg width="54" height="26" viewBox="0 0 54 26">
              <circle cx="6" cy="7" r="5.500" fill="#c26a22" stroke="#4a2306" />
              <circle cx="15" cy="18" r="5.500" fill="#a9571a" stroke="#4a2306" />
              <path d="M31 3h19v20H31z" fill="#fff" stroke="#b5571c" strokeWidth="2" />
              <path d="M32 4h6v6h-6zM43 4h6v6h-6zM38 10h5v6h-5zM32 16h6v6h-6zM43 16h6v6h-6z" fill="#0a0a0a" />
            </svg>
          </div>
        </div>
      </div>
    </div>
    <div className="ml-[2px] pt-[1px]">
      <VTabs tabs={[['对象', 50, 1], ['场次', 46], ['内容浏览器', 101], ['构造', 49]]} />
    </div>
  </div>
)

const Slider = ({ label, value, fill, notch }) => (
  <div className="flex h-[26px] items-center pl-[34px]">
    <span className="w-[40px]">{label}</span>
    <Field value={value} off className="h-[26px] w-[124px]" />
    <div className="relative h-[26px] w-[732px] border-t border-b border-t-[#232323] border-b-[#484848] bg-[#2d2c2d]">
      <div className="h-full bg-[#737373]" style={{ width: fill }} />
      {notch && <i className="absolute bottom-0 left-1/2 h-[6px] w-[1px] bg-[#222]" />}
    </div>
  </div>
)

const gx = (v) => 1994.4 + v * 782.5
const gy = (v) => 1505 - v * 192

const FalloffGraph = () => (
  <svg viewBox="1906 1286 938 303" className="h-[303px] w-[938px] shrink-0">
    <g stroke="#28272a" strokeWidth="1.500">
      {Array.from({ length: 22 }, (_, i) => (
        <path key={i} d={`M${gx(i * 0.05)} 1290V1528`} />
      ))}
      {[0.8, 0.6, 0.4, 0.2].map((v) => (
        <path key={v} d={`M1971 ${gy(v)}H2841`} />
      ))}
    </g>
    <path d="M1994.400 1288V1528" stroke="#0e0d10" strokeWidth="1.500" />
    <path d="M1971 1313H2841M1971 1505H2841" stroke="#0e0d10" strokeWidth="1.500" strokeDasharray="2 2" />
    <path d="M1994.400 1313L2229 1397.500Q2330 1433 2385.600 1448Q2540 1488 2777 1505" fill="none" stroke="#100f14" strokeWidth="1.500" />
    {[[0, 1], [0.5, 0.3], [1, 0]].map(([a, b]) => (
      <circle key={a} cx={gx(a)} cy={gy(b)} r="4" fill="#0e0d10" />
    ))}
    <path d="M1958 1293l7 5-7 5z" fill="#0e0d10" />
    <path d="M1993 1499.500h7M2007 1499.500h5" stroke="#858585" strokeWidth="1.500" />
    <g fontSize="16.500" letterSpacing="-0.500" fill="#858585" textAnchor="middle">
      <text x="2003" y="1356">0.8</text>
      <text x="2003" y="1433">0.4</text>
      {['0.0', '0.1', '0.2', '0.3', '0.4', '0.5', '0.6', '0.7', '0.8', '0.9', '1.0'].map((t, i) => (
        <text key={t} x={gx(i / 10) - 2} y="1520">{t}</text>
      ))}
    </g>
  </svg>
)

const Section = ({ children, className }) => (
  <div className={clsx('ml-[3px] flex h-[24px] w-[931px] shrink-0 items-center bg-[#201e21] pt-[2px] pl-[4px] font-medium text-[#bcbcbc]', className)}>{children}</div>
)

const Attributes = () => (
  <div className="mt-[6px] flex h-[713px] shrink-0">
    <div className="flex w-[941px] flex-col border border-b-0 border-[#4a4a4a] border-r-[#222] text-[16.600px] leading-none text-[#b3b3b3]">
      <div className="flex h-[35px] shrink-0 items-center border-b-2 border-[#505050] pl-[9px]">
        <Grip className="mr-[10px]" />
        <MenuItems items={[['模式'], ['编辑'], ['用户数据']]} dim="text-[#a8a8a8]" />
        <div className="mr-[3px] ml-auto flex items-center">
          <svg width="92" height="24" viewBox="0 0 92 24">
            <path d="M0 12L23 2v19z" fill="#0c0c0c" />
            <path d="M26 12l6 8 20-9" fill="none" stroke="#454545" strokeWidth="2" />
            <path d="M68 22L79 3l11 19-11-4z" fill="none" stroke="#464646" strokeWidth="1.500" />
          </svg>
          <Loupe className="ml-[18px]" />
          <svg width="20" height="24" viewBox="0 0 20 24" className="ml-[18px]">
            <path d="M2 11h15v12H2z" fill="none" stroke="#0f0f0f" strokeWidth="2" />
            <path d="M7 11V5q3-5 7 0v3M9.500 14v6" fill="none" stroke="#0f0f0f" strokeWidth="2.200" />
          </svg>
          <svg width="24" height="24" viewBox="0 0 24 24" className="mr-[5px] ml-[4px]">
            <g fill="none" stroke="#0f0f0f" strokeWidth="2">
              <circle cx="12" cy="12" r="10" />
              <circle cx="12" cy="12" r="5.500" />
            </g>
            <circle cx="12" cy="12" r="2" fill="#0f0f0f" />
          </svg>
          <PlusBox />
        </div>
      </div>
      <div className="flex h-[40px] shrink-0 items-center pl-[3px]">
        <svg width="32" height="36" viewBox="0 0 32 36">
          <path d="M1.500 4h15v15h-15z" fill="none" stroke="#b8381c" strokeWidth="2" />
          <path d="M19 21l13 8-6 1 2 5-3 1-3-6-3 2z" fill="#0c0c0c" />
        </svg>
        <span className="ml-[7px]">框选</span>
      </div>
      <div className="ml-[4px] flex h-[27px] w-[312px] shrink-0 overflow-hidden rounded-[4px] border border-[#1c1c1c]">
        {[['选项', 1], ['轴向'], ['对象轴心'], ['柔和选择', 1]].map(([label, on], i) => (
          <span key={label} className={clsx('flex flex-1 items-center justify-center whitespace-nowrap', i > 0 && 'border-l border-[#2b2b2b]', on ? 'bg-[#7f9bcf] font-medium text-[#0c1224]' : 'bg-[#5d5d5d] text-[#c9c9c9]')}>
            {label}
          </span>
        ))}
      </div>
      <Section className="mt-[8px]">选项</Section>
      <div className="mt-[10px] flex h-[20px] items-center pl-[34px]">
        <span className="flex w-[122px]">容差选择<span className="tracking-[3.500px]">......</span></span>
        <Check />
      </div>
      <div className="mt-[8px] flex h-[20px] items-center pl-[34px]">
        <span className="w-[122px]">仅选择可见元素</span>
        <Check />
      </div>
      <Section className="mt-[10px]">柔和选择</Section>
      <div className="mt-[9px] flex h-[20px] items-center pl-[34px]">
        <span className="w-[40px]">启用</span>
        <Check />
        <span className="ml-[55px] w-[40px] text-[#858585]">预览</span>
        <Check checked />
      </div>
      <div className="mt-[9px] flex h-[20px] items-center pl-[34px] text-[#858585]">
        <span className="w-[40px]">表面</span>
        <Check off />
        <span className="ml-[55px] w-[40px]">橡皮</span>
        <Check off />
        <span className="ml-[55px] w-[41px]">限制</span>
        <Check off />
      </div>
      <div className="mt-[6px] flex h-[24px] items-center pl-[34px] text-[#858585]">
        <span className="w-[40px]">衰减</span>
        <Dropdown value="线性" off className="h-[24px] w-[112px]" />
        <span className="ml-[32px] w-[41px]">模式</span>
        <Dropdown value="全部" off className="h-[24px] w-[96px]" />
      </div>
      <div className="mt-[6px] flex flex-col gap-[5.500px] text-[#858585]">
        <Slider label="半径" value="100 cm" fill="10%" />
        <Slider label="强度" value="100 %" fill="100%" notch />
        <Slider label="宽度" value="50 %" fill="50%" />
      </div>
      <FalloffGraph />
    </div>
    <div className="ml-[2px] pt-[1px]">
      <VTabs tabs={[['属性', 48, 1], ['层', 34]]} />
    </div>
  </div>
)

/* ---------- dock, each icon on a 102x119 slot ---------- */

const Adobe = ({ label, color, bg }) => (
  <g>
    <rect x="8" y="12" width="86" height="84" fill={bg} stroke={color} strokeWidth="4" />
    <text x="51" y="70" textAnchor="middle" fontSize="46" fontFamily='"Open Sans"' fontWeight="600" fill={color} textLength={label === 'Id' ? 40 : label === 'Lr' ? 43 : label === 'Ai' ? 45 : 52} lengthAdjust="spacingAndGlyphs">{label}</text>
  </g>
)

const dock = {
  finder: (
    <g>
      <path d="M11 18h80v75H11z" fill="#e9edf5" />
      <path d="M11 18h42q-6 20-7 44h11q-1 18 2 31H11z" fill="url(#finderBlue)" />
      <path d="M53 18q-6 20-7 44h11q-1 18 2 31" fill="none" stroke="#10243f" strokeWidth="1.500" />
      <path d="M33 39v8M69 39v8" stroke="#10243f" strokeWidth="3" strokeLinecap="round" />
      <path d="M28 67q23 19 47 0" fill="none" stroke="#10243f" strokeWidth="2.800" strokeLinecap="round" />
    </g>
  ),
  siri: (
    <g>
      <circle cx="51" cy="56" r="40.500" fill="url(#siriBig)" stroke="#dcdae2" strokeWidth="3" />
      <path d="M51 56L24 36q12-20 34-17 16 3 22 14z" fill="url(#siriPink)" />
      <path d="M51 56L20 78q-8-14-6-32z" fill="#2a66c9" opacity=".55" />
      <path d="M51 56l31 17q6-14 3-30z" fill="#2fc6b6" opacity=".55" />
      <path d="M51 56l8 37q-9 3-17 0z" fill="#d64d92" opacity=".55" />
      <path d="M53 36l2 17 14-3-12 8 25 15-26-11 4 28-8-27-31 13 27-18-14-8 16 3z" fill="#eafcff" opacity=".85" />
    </g>
  ),
  rocket: (
    <g>
      <circle cx="51" cy="56" r="40.500" fill="url(#rocketBg)" stroke="#e2e4e6" strokeWidth="2.500" />
      <path d="M76 30Q58 31 46 52L34 50q-8 3-13 11l14-1 11 13 2 13q7-5 8-17l1-7q19-12 19-32z" fill="#33373c" />
      <circle cx="60" cy="47" r="5" fill="#aeb6bb" />
      <path d="M31 66q-7 3-7 15 9-2 14-9z" fill="#33373c" />
    </g>
  ),
  safari: (
    <g>
      <circle cx="51" cy="56" r="40.500" fill="url(#safariBg)" stroke="#e8e8ea" strokeWidth="3" />
      <circle cx="51" cy="56" r="35" fill="none" stroke="#bfe3fb" strokeWidth="5" strokeDasharray="1 3.600" />
      <path d="M77 31L46 51l10 9z" fill="#f13b36" />
      <path d="M27 81l19-30 10 9z" fill="#f1f1f1" />
    </g>
  ),
  calendar: (
    <g transform="translate(3 0) rotate(-6 50 56)">
      <path d="M8 22l76-4 5 74-74 4z" fill="#55585c" />
      <path d="M13 17h68v74H13z" fill="#fafafa" />
      <path d="M13 17h68v20H13z" fill="#e23b3a" />
      <text x="47" y="33" textAnchor="middle" fontSize="16" fill="#fff">9月</text>
      <text x="47" y="77" textAnchor="middle" fontSize="41" fontWeight="300" letterSpacing="-2" fill="#222">21</text>
    </g>
  ),
  notes: (
    <g transform="rotate(-6 52 56)">
      <path d="M19 17h66v78H19z" fill="#f7f7f4" />
      <path d="M19 17h66v15H19z" fill="#fbc52e" />
      <path d="M19 40h66M19 47h66M19 54h66M19 61h66M19 68h66M19 75h66M19 82h66M19 89h66" stroke="#cfcfcf" strokeWidth="1.200" />
    </g>
  ),
  dplayer: (
    <g>
      <path d="M24 77l9-4 18 16 18-20 13-5v13L51 98z" fill="#5a74f5" />
      <path d="M51 14l48 33-30 20-18 17-18-16-13 10V58L3 47z" fill="#35c4fb" stroke="#0b0a0b" strokeWidth="1" />
      <path d="M45 33l22 14-22 14z" fill="#fff" />
    </g>
  ),
  c4d: (
    <g>
      <circle cx="51" cy="56" r="44.500" fill="url(#c4dRing)" />
      <ellipse cx="54" cy="59" rx="34" ry="37" fill="url(#c4dIn)" />
      <path d="M70 15q16 8 22 24-8-3-10 14L52 40l-4-8q14 1 20-8 3-5 2-9z" fill="#141a55" />
      <ellipse cx="58" cy="50" rx="25" ry="27" fill="url(#c4dBall)" />
      <path d="M71 17q14 7 19 20" fill="none" stroke="#5266c4" strokeWidth="2.500" />
    </g>
  ),
  ps: <Adobe label="Ps" color="#27b9d9" bg="#02131b" />,
  ai: <Adobe label="Ai" color="#f08a27" bg="#200c02" />,
  id: <Adobe label="Id" color="#e2448b" bg="#26020f" />,
  ae: <Adobe label="Ae" color="#c693f0" bg="#190545" />,
  an: <Adobe label="An" color="#df2a22" bg="#1c0203" />,
  lr: <Adobe label="Lr" color="#b0daf0" bg="#061d2b" />,
  word: (
    <g fill="none" strokeLinecap="round" strokeLinejoin="round" strokeWidth="16">
      <path d="M72 82L84 30" stroke="#1a70b5" />
      <path d="M36 82L53 44" stroke="#1767a8" />
      <path d="M17 26l17 60" stroke="#2b8fdb" />
      <path d="M53 45l18 39" stroke="#2f95df" />
    </g>
  ),
  ppt: (
    <g fill="none" strokeLinecap="round" strokeWidth="19">
      <path d="M48 60q28-3 28-22" stroke="#b52a0c" />
      <path d="M33 25h18q22 0 25 14" stroke="#f24a20" />
      <path d="M35 89V62h12" stroke="#ef4a22" strokeLinejoin="round" />
    </g>
  ),
  video: (
    <g>
      <path d="M14 48l76-13 4 46-75 18z" fill="#0a0a0a" />
      <path d="M16 50l69-11 7 43-69 13z" fill="#1f80d8" />
      <path d="M24 93l8-11 50-12 9 11z" fill="#8ec0ea" />
      <path d="M17 54l69-11" stroke="#d7ecff" strokeWidth="2.500" strokeDasharray="3 3" />
      <path d="M10 30l68-18 6 14-71 22z" fill="#161616" />
      <path d="M9 27q6-6 16-2l11 6-1 11-23 6z" fill="#9aa0a5" />
      <path d="M37 22l9-3 10 8-9 14-10 2 8-12zM61 14l9-3 10 10-11 13-9 1 9-11z" fill="#eee" />
      <circle cx="55" cy="67" r="14" fill="#4aa5ee" stroke="#e8f4ff" strokeWidth="3" />
      <path d="M50 58l14 9-14 9z" fill="#fff" />
    </g>
  ),
  trash: (
    <g>
      <path d="M18 22q33 12 66 0l-7 69q-3 8-26 8t-26-8z" fill="url(#trashBg)" />
      <path d="M26 20l6-8 9 4 6-5 8 6 8-5 6 5 8 2-3 8-12 3-8-2-9 3-12-2z" fill="#d9dad8" />
      <path d="M36 18l6-2 2 8zM44 20l6-6 4 7zM62 16l7 5-8 3z" fill="#4d5c68" />
      <path d="M18 22q33 12 66 0" fill="none" stroke="#777" strokeWidth="2" />
    </g>
  ),
}

const DockSlot = ({ name, running }) => (
  <svg width="102" height="118" viewBox="0 1 102 118" className="shrink-0">
    {dock[name]}
    {running && <circle cx="51" cy="113" r="3" fill="#b9b9b9" />}
  </svg>
)

const Dock = () => (
  <div className="ml-[470px] flex h-[119px] w-[1940px] shrink-0 items-start rounded-t-[8px] border border-b-0 border-[#2b2b2c] bg-[#0b0a0b] pl-[4px]">
    <svg width="0" height="0">
      <defs>
        <linearGradient id="finderBlue" x2="0" y2="1"><stop stopColor="#20c0f8" /><stop offset="1" stopColor="#1d66ee" /></linearGradient>
        <radialGradient id="siriBig"><stop stopColor="#7fd7f0" /><stop offset=".5" stopColor="#352c74" /><stop offset="1" stopColor="#120d26" /></radialGradient>
        <linearGradient id="siriPink" x2="0" y2="1"><stop stopColor="#a3145f" /><stop offset="1" stopColor="#e25aa8" stopOpacity=".5" /></linearGradient>
        <linearGradient id="rocketBg" x2="0" y2="1"><stop stopColor="#c2ced3" /><stop offset="1" stopColor="#6a6c6e" /></linearGradient>
        <radialGradient id="safariBg"><stop stopColor="#34c5f3" /><stop offset="1" stopColor="#1b6fe6" /></radialGradient>
        <linearGradient id="c4dRing" x2="0" y2="1"><stop stopColor="#fff" /><stop offset=".5" stopColor="#dcdde6" /><stop offset="1" stopColor="#8d8fa8" /></linearGradient>
        <linearGradient id="c4dIn" x1="1" x2="0" y2="1"><stop stopColor="#07082a" /><stop offset=".6" stopColor="#0b0d38" /><stop offset="1" stopColor="#8d90e0" /></linearGradient>
        <radialGradient id="c4dBall" cx=".4" cy=".7"><stop stopColor="#8095ee" /><stop offset=".5" stopColor="#2c3aa6" /><stop offset="1" stopColor="#0d1145" /></radialGradient>
        <linearGradient id="trashBg"><stop stopColor="#4a4b4c" /><stop offset=".5" stopColor="#7b7c7d" /><stop offset="1" stopColor="#424344" /></linearGradient>
      </defs>
    </svg>
    {['finder', 'siri', 'rocket', 'safari', 'calendar', 'notes', 'dplayer', 'c4d', 'ps', 'ai', 'id', 'ae', 'an', 'lr', 'word', 'ppt'].map((n) => (
      <DockSlot key={n} name={n} running={['finder', 'c4d', 'ps'].includes(n)} />
    ))}
    <div className="mt-[29px] mr-[21px] ml-[25px] h-[60px] w-[1px] bg-[#6b6b6b]" />
    <DockSlot name="video" running />
    <div className="mt-[14px] mr-[22px] ml-[23px] h-[90px] w-[1px] bg-[#6b6b6b]" />
    <DockSlot name="trash" />
  </div>
)

const App = () => (
  <div className="flex h-[1800px] w-[2880px] flex-col overflow-hidden bg-black pt-[90px] font-[Inter,'Noto_Sans_CJK_SC',sans-serif]">
    <MenuBar />
    <TitleBar />
    <div className="flex h-[1432px] shrink-0 flex-col overflow-hidden rounded-b-[8px] bg-[#353435]">
      <div className="flex h-[32px] shrink-0 items-center pt-[1px] pl-[12px]">
        <MenuItems items={MENU} />
        <span className="ml-auto text-[16.600px] leading-none text-[#a8a8a8]">界面:</span>
        <Dropdown value="启动" className="ml-[9px] h-[25px] w-[191px]" />
        <Loupe className="mr-[3px] ml-[11px]" />
      </div>
      <div className="flex h-[1400px]">
        <div className="flex w-[1905px] shrink-0 flex-col">
          <div className="flex h-[64px] shrink-0 items-start pt-[6px]">
            <Grip cols={2} rows={9} className="mt-[8px] mr-[5px]" />
            <ToolGroup className="w-[106px]" items={[['undo'], ['redo']]} />
            <ToolGroup className="ml-[16px] w-[215px]" items={[['select', 'on'], ['move'], ['scale'], ['rotate']]} />
            <ToolGroup className="ml-[5px] w-[53px]" items={[['select']]} />
            <ToolGroup className="ml-[15px] w-[215px]" items={[['x', 'on'], ['y', 'on'], ['z', 'on'], ['coord']]} />
            <ToolGroup className="ml-[16px] w-[161px]" items={[['renderView'], ['renderPic', 'ring'], ['renderSet']]} />
            <ToolGroup
              className="ml-[16px] w-[431px]"
              items={[['cube'], ['pen'], ['sds'], ['array', 'ring'], ['bend', 'ring'], ['floor'], ['camera', 'cream'], ['bulb', 'ring']]}
            />
          </div>
          <div className="flex h-[1303px] shrink-0">
            <div className="flex w-[60px] shrink-0 flex-col">
              <Grip cols={10} rows={2} className="mt-[1px] ml-[8px]" />
              <SideGroup className="mt-[4px] h-[52px]" items={[['globe']]} />
              <SideGroup className="mt-[16px] h-[161px]" items={[['model'], ['texture'], ['mesh']]} />
              <SideGroup className="mt-[4px] h-[161px]" items={[['points'], ['edges'], ['polys', 1]]} />
              <SideGroup className="mt-[16px] h-[161px]" items={[['axisMode'], ['mouse', 1], ['solo', 1]]} />
              <SideGroup className="mt-[16px] h-[53px]" items={[['magnet']]} />
              <SideGroup className="mt-[16px] h-[107px]" items={[['gridLock', 1], ['gridRotate']]} />
              <div className="mt-auto mb-[7px] ml-[1px] flex items-end text-[#8b8b8b]">
                <span className="w-[28px] rotate-180 text-[23.500px] leading-[28px] font-extrabold italic [writing-mode:vertical-rl]">MAXON</span>
                <span className="w-[28px] rotate-180 text-[23.500px] leading-[28px] tracking-[-0.800px] whitespace-nowrap [writing-mode:vertical-rl]">CINEMA 4D</span>
              </div>
            </div>
            <div className="flex w-[1839px] shrink-0 flex-col">
              <ViewportHeader />
              <Viewport />
              <Timeline />
              <Transport />
              <div className="mt-[1px] flex">
                <Materials />
                <Coordinates />
              </div>
            </div>
          </div>
          <div className="mt-[4px] flex h-[29px] w-[1900px] items-center border-t-2 border-r border-[#505050] border-r-[#222] pt-[1px] pl-[6px]">
            <Grip className="mr-[13px]" />
            <span className="text-[16.600px] leading-none tracking-[-0.100px] whitespace-nowrap text-[#b0b0b0]">
              框选：点击并拖动鼠标框选元素。按住 SHIFT 键增加选择对象；按住 CTRL 键减少选择对象。
            </span>
          </div>
        </div>
        <div className="flex w-[975px] shrink-0 flex-col pt-[6px]">
          <ObjectManager />
          <Attributes />
        </div>
      </div>
    </div>
    <div className="h-[2px] shrink-0" />
    <Dock />
  </div>
)

export default App
